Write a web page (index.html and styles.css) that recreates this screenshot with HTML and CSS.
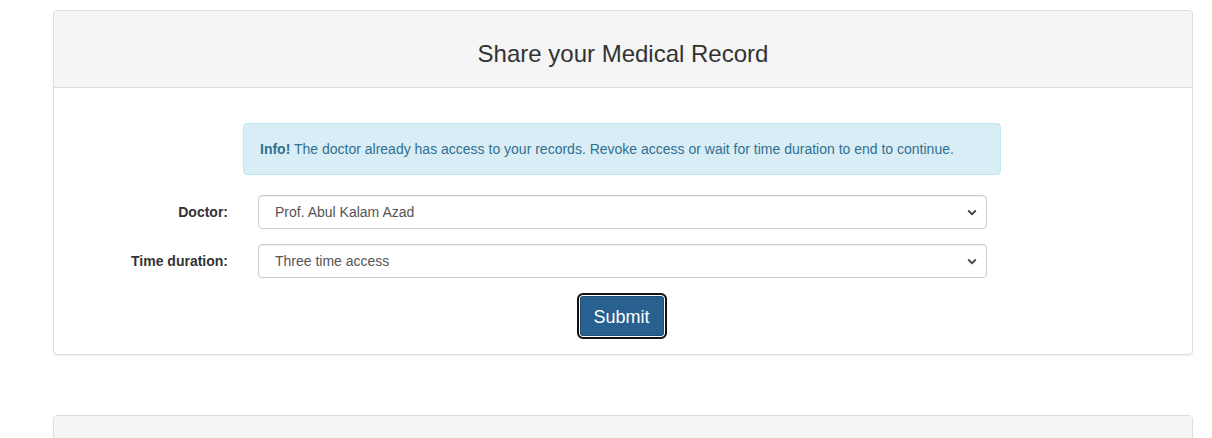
FILE: index.html
```html
<!DOCTYPE html>
<html lang="en">
<head>
<meta charset="utf-8">
<title>Share your Medical Record</title>
<link rel="stylesheet" href="styles.css">
</head>
<body>
<div class="page">
  <section class="panel">
    <div class="panel-heading">
      <h3 class="panel-title">Share your Medical Record</h3>
    </div>
    <div class="panel-body">
      <form class="form">
        <div class="row">
          <div class="label-col"></div>
          <div class="alert"><strong>Info!</strong> The doctor already has access to your records. Revoke access or wait for time duration to end to continue.</div>
        </div>
        <div class="row group">
          <label class="label-col" for="doctor">Doctor:</label>
          <div class="select-wrap">
            <select id="doctor" class="control">
              <option>Prof. Abul Kalam Azad</option>
            </select>
            <svg class="chev" width="10" height="7" viewBox="0 0 10 7"><path d="M1.2 1.5 L5 5.2 L8.8 1.5" fill="none" stroke="#444" stroke-width="1.8"/></svg>
          </div>
        </div>
        <div class="row group">
          <label class="label-col" for="duration">Time duration:</label>
          <div class="select-wrap">
            <select id="duration" class="control">
              <option>Three time access</option>
            </select>
            <svg class="chev" width="10" height="7" viewBox="0 0 10 7"><path d="M1.2 1.5 L5 5.2 L8.8 1.5" fill="none" stroke="#444" stroke-width="1.8"/></svg>
          </div>
        </div>
        <div class="actions">
          <button type="button" class="btn">Submit</button>
        </div>
      </form>
    </div>
  </section>
  <section class="panel panel-second">
    <div class="panel-heading tall"></div>
  </section>
</div>
</body>
</html>
```

FILE: styles.css
```css
* { box-sizing: border-box; }
html, body { margin: 0; padding: 0; background: #fff; }
body {
  font-family: "Liberation Sans", Arial, sans-serif;
  font-size: 14px;
  line-height: 20px;
  color: #333;
  overflow: hidden;
}
.page {
  padding: 10px 19px 0 53px;
}
.panel {
  border: 1px solid #ddd;
  border-radius: 4px;
  background: #fff;
  box-shadow: 0 1px 1px rgba(0,0,0,0.05);
}
.panel-second {
  margin-top: 60px;
}
.panel-heading {
  background: #f5f5f5;
  border-bottom: 1px solid #ddd;
  border-radius: 3px 3px 0 0;
  padding: 10px 15px;
}
.panel-heading.tall { height: 30px; border-bottom: none; }
.panel-title {
  margin: 20px 0 10px;
  font-size: 24px;
  font-weight: 500;
  line-height: 26px;
  text-align: center;
  color: #333;
}
.panel-body {
  padding: 35px 0 15px 37px;
}
.form {
  width: 910px;
}
.row {
  display: flex;
  align-items: center;
}
.group { margin-bottom: 15px; }
.label-col {
  width: 152px;
  flex: none;
  padding-right: 15px;
  text-align: right;
  font-weight: bold;
  color: #333;
}
.alert {
  width: 758px;
  padding: 15px 15px 15px 16px;
  margin-bottom: 20px;
  background: #d9edf7;
  border: 1px solid #bce8f1;
  border-radius: 4px;
  color: #31708f;
  font-size: 14px;
  line-height: 20px;
}
.alert strong { font-weight: bold; }
.select-wrap {
  position: relative;
  margin-left: 15px;
  width: 729px;
}
.control {
  -webkit-appearance: none;
  appearance: none;
  display: block;
  width: 100%;
  height: 34px;
  padding: 6px 12px 6px 16px;
  font-family: "Liberation Sans", Arial, sans-serif;
  font-size: 14px;
  line-height: 20px;
  color: #555;
  background: #fff;
  border: 1px solid #ccc;
  border-radius: 4px;
  box-shadow: inset 0 1px 1px rgba(0,0,0,0.075);
}
.chev {
  position: absolute;
  right: 10px;
  top: 14px;
  pointer-events: none;
}
.actions {
  display: flex;
  justify-content: center;
  padding-left: 151px;
}
.btn {
  height: 46px;
  width: 90px;
  padding: 10px 0;
  font-family: "Liberation Sans", Arial, sans-serif;
  font-size: 18px;
  line-height: 24px;
  color: #fff;
  background: #28608f;
  border: 2px solid #111;
  border-radius: 6px;
  box-shadow: inset 0 0 0 1px #fff, inset 0 0 0 2px #204d74;
  cursor: pointer;
}
```
